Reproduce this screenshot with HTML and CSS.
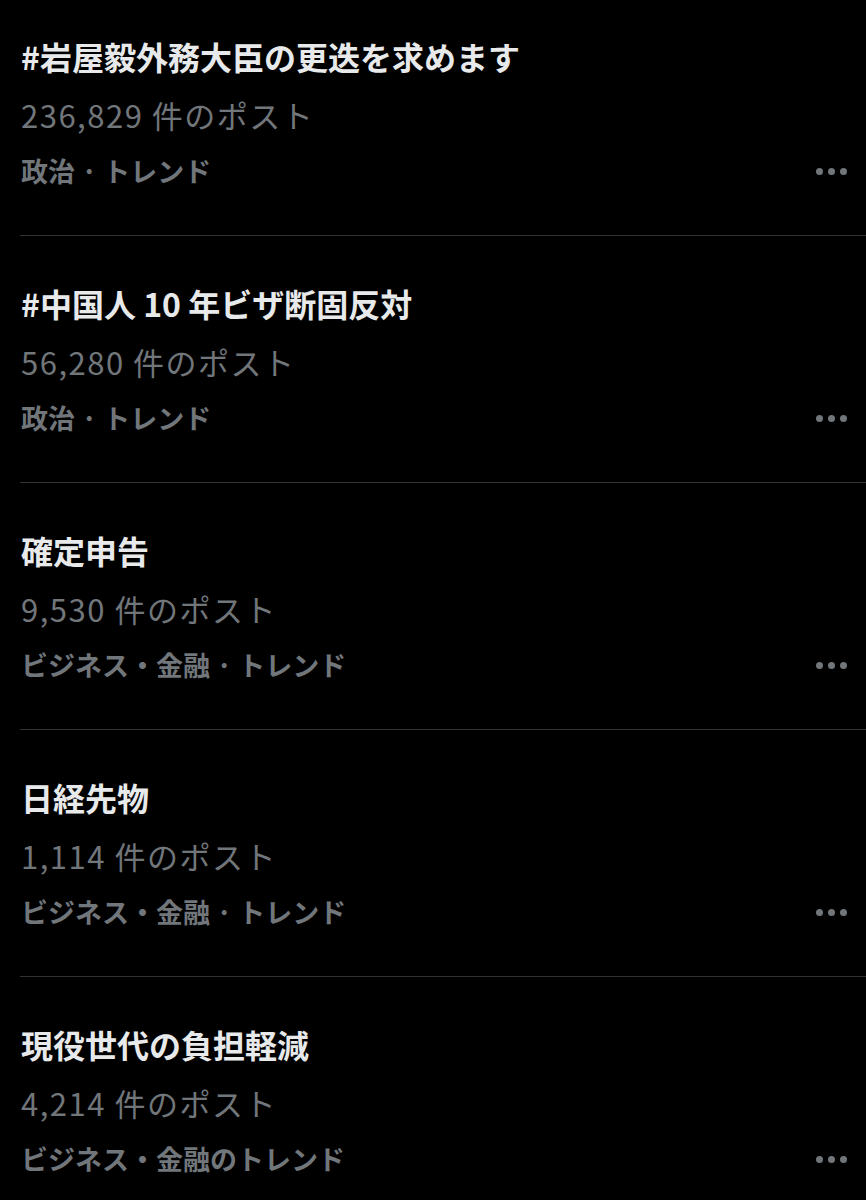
FILE: index.html
```html
<!DOCTYPE html>
<html lang="ja">
<head>
	<meta charset="UTF-8">
	<meta name="viewport" content="width=device-width, initial-scale=1.0">
	<title>トレンド</title>
	<link rel="stylesheet" href="styles.css">
</head>
<body>

	<div class="trends">
		<div class="trend">
			<div class="trend__title">#岩屋毅外務大臣の更迭を求めます</div>
			<div class="trend__count">236,829 件のポスト</div>
			<div class="trend__meta">
				<span>政治 · トレンド</span>
				<span class="more"><i></i><i></i><i></i></span>
			</div>
		</div>

		<div class="trend">
			<div class="trend__title">#中国人 10 年ビザ断固反対</div>
			<div class="trend__count">56,280 件のポスト</div>
			<div class="trend__meta">
				<span>政治 · トレンド</span>
				<span class="more"><i></i><i></i><i></i></span>
			</div>
		</div>

		<div class="trend">
			<div class="trend__title">確定申告</div>
			<div class="trend__count">9,530 件のポスト</div>
			<div class="trend__meta">
				<span>ビジネス・金融 · トレンド</span>
				<span class="more"><i></i><i></i><i></i></span>
			</div>
		</div>

		<div class="trend">
			<div class="trend__title">日経先物</div>
			<div class="trend__count">1,114 件のポスト</div>
			<div class="trend__meta">
				<span>ビジネス・金融 · トレンド</span>
				<span class="more"><i></i><i></i><i></i></span>
			</div>
		</div>

		<div class="trend">
			<div class="trend__title">現役世代の負担軽減</div>
			<div class="trend__count">4,214 件のポスト</div>
			<div class="trend__meta">
				<span>ビジネス・金融のトレンド</span>
				<span class="more"><i></i><i></i><i></i></span>
			</div>
		</div>
	</div>

</body>
</html>
```
FILE: styles.css
```css
* {
    margin: 0;
    padding: 0;
    box-sizing: border-box;
}

body {
    background: #000;
    font-family: "Noto Sans CJK JP", "Noto Sans", sans-serif;
    height: 1200px;
    overflow: hidden;
}

.trends {
    margin-left: 20px;
}

.trend {
    padding: 47px 0 48px 1px;
    border-bottom: 1px solid #2f3336;
}

.trend:first-child {
    padding-top: 36px;
}

.trend__title {
    font-size: 32px;
    line-height: 40px;
    font-weight: 700;
    color: #e7e9ea;
}

.trend__count {
    margin-top: 19px;
    font-size: 31px;
    line-height: 40px;
    letter-spacing: 1.5px;
    font-weight: 400;
    color: #71767b;
}

.trend__meta {
    display: flex;
    justify-content: space-between;
    align-items: center;
    margin-top: 20px;
    font-size: 27px;
    line-height: 32px;
    font-weight: 700;
    color: #71767b;
}

.more {
    display: flex;
    gap: 5px;
    margin-right: 19px;
}

.more i {
    width: 7px;
    height: 7px;
    border-radius: 50%;
    background: #71767b;
}
```
